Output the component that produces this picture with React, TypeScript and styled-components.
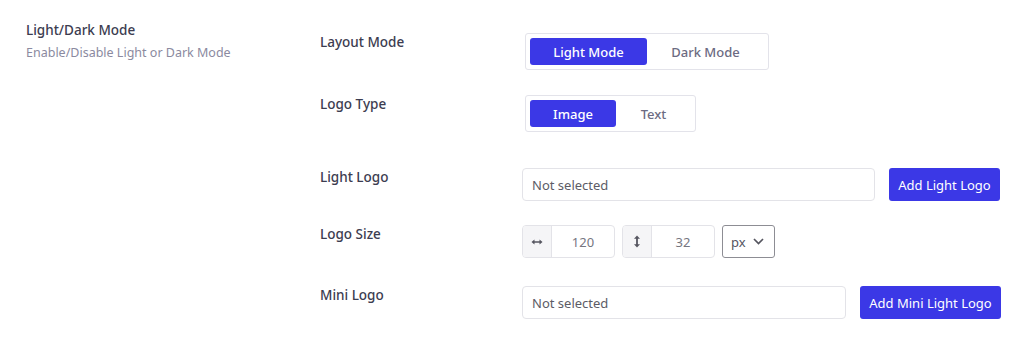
import React from "react";
import styled, { createGlobalStyle } from "styled-components";

const Global = createGlobalStyle`
  html, body { margin: 0; padding: 0; background: #ffffff; }
  body { font-family: "Noto Sans", "Open Sans", sans-serif; }
  * { box-sizing: border-box; }
`;

const Page = styled.div`
  display: flex;
  align-items: flex-start;
  padding: 21px 0 0 26px;
  width: 1034px;
  height: 355px;
`;

const Intro = styled.div`
  width: 294px;
  flex-shrink: 0;
  display: flex;
  flex-direction: column;
  gap: 5px;
`;

const Title = styled.div`
  font-size: 13.5px;
  line-height: 18px;
  font-weight: 500;
  color: #3c3c50;
`;

const Subtitle = styled.div`
  font-size: 12.5px;
  line-height: 18px;
  color: #8b8aa0;
`;

const Fields = styled.div`
  display: flex;
  flex-direction: column;
  padding-top: 12px;
`;

const Row = styled.div<{ $top: number }>`
  display: flex;
  align-items: flex-start;
  margin-top: ${(p) => p.$top}px;
`;

const Label = styled.div`
  width: 202px;
  flex-shrink: 0;
  font-size: 13.5px;
  line-height: 18px;
  font-weight: 500;
  color: #3c3c50;
`;

const Segmented = styled.div`
  display: flex;
  padding: 4px;
  border: 1px solid #e3e3ea;
  border-radius: 3px;
  margin-left: 3px;
`;

const SegButton = styled.button<{ $active?: boolean; $w: number }>`
  width: ${(p) => p.$w}px;
  height: 27px;
  border: none;
  border-radius: 3px;
  font-family: inherit;
  font-size: 13px;
  font-weight: 500;
  background: ${(p) => (p.$active ? "#3b38e6" : "transparent")};
  color: ${(p) => (p.$active ? "#ffffff" : "#6c6b82")};
  cursor: pointer;
  padding: 0;
`;

const FileInput = styled.div<{ $w: number }>`
  width: ${(p) => p.$w}px;
  height: 33px;
  border: 1px solid #e3e3e8;
  border-radius: 4px;
  display: flex;
  align-items: center;
  padding-left: 9px;
  font-size: 13px;
  color: #5c5c66;
`;

const PrimaryButton = styled.button<{ $gap: number; $w: number }>`
  margin-left: ${(p) => p.$gap}px;
  width: ${(p) => p.$w}px;
  height: 33px;
  border: none;
  border-radius: 3px;
  background: #3b38e6;
  color: #ffffff;
  font-family: inherit;
  font-size: 13px;
  padding: 0;
  cursor: pointer;
`;

const SizeGroup = styled.div`
  display: flex;
  gap: 7px;
`;

const InputGroup = styled.div`
  display: flex;
  width: 93px;
  height: 33px;
  border: 1px solid #e3e3e8;
  border-radius: 4px;
  overflow: hidden;
`;

const Addon = styled.div`
  width: 29px;
  flex-shrink: 0;
  background: #f5f5f7;
  border-right: 1px solid #e3e3e8;
  display: flex;
  align-items: center;
  justify-content: center;
  color: #55555f;
`;

const NumberValue = styled.div`
  flex: 1;
  display: flex;
  align-items: center;
  justify-content: center;
  font-size: 13px;
  color: #76767f;
`;

const Select = styled.div`
  width: 53px;
  height: 33px;
  border: 1px solid #8d8d94;
  border-radius: 3px;
  display: flex;
  align-items: center;
  padding-left: 8px;
  gap: 7px;
  font-size: 13px;
  color: #55555f;
`;

const HArrow = () => (
  <svg width="12" height="8" viewBox="0 0 12 8" fill="none">
    <path d="M2.5 4h7" stroke="currentColor" strokeWidth="1.6" />
    <path d="M0.5 4L3.5 1.5V6.5Z" fill="currentColor" />
    <path d="M11.5 4L8.5 1.5V6.5Z" fill="currentColor" />
  </svg>
);

const VArrow = () => (
  <svg width="8" height="13" viewBox="0 0 8 13" fill="none">
    <path d="M4 2.5v8" stroke="currentColor" strokeWidth="1.8" />
    <path d="M4 0.5L1 3.8H7Z" fill="currentColor" />
    <path d="M4 12.5L1 9.2H7Z" fill="currentColor" />
  </svg>
);

const Chevron = () => (
  <svg width="11" height="7" viewBox="0 0 11 7" fill="none">
    <path d="M1 1l4.5 4.5L10 1" stroke="#55555f" strokeWidth="1.7" />
  </svg>
);

export default function App() {
  return (
    <>
      <Global />
      <Page>
        <Intro>
          <Title>Light/Dark Mode</Title>
          <Subtitle>Enable/Disable Light or Dark Mode</Subtitle>
        </Intro>
        <Fields>
          <Row $top={0}>
            <Label>Layout Mode</Label>
            <Segmented>
              <SegButton $active $w={117}>Light Mode</SegButton>
              <SegButton $w={117}>Dark Mode</SegButton>
            </Segmented>
          </Row>
          <Row $top={25}>
            <Label>Logo Type</Label>
            <Segmented>
              <SegButton $active $w={86}>Image</SegButton>
              <SegButton $w={75}>Text</SegButton>
            </Segmented>
          </Row>
          <Row $top={36}>
            <Label>Light Logo</Label>
            <FileInput $w={353}>Not selected</FileInput>
            <PrimaryButton $gap={14} $w={111}>Add Light Logo</PrimaryButton>
          </Row>
          <Row $top={24}>
            <Label>Logo Size</Label>
            <SizeGroup>
              <InputGroup>
                <Addon><HArrow /></Addon>
                <NumberValue>120</NumberValue>
              </InputGroup>
              <InputGroup>
                <Addon><VArrow /></Addon>
                <NumberValue>32</NumberValue>
              </InputGroup>
              <Select>
                px <Chevron />
              </Select>
            </SizeGroup>
          </Row>
          <Row $top={28}>
            <Label>Mini Logo</Label>
            <FileInput $w={324}>Not selected</FileInput>
            <PrimaryButton $gap={14} $w={141}>Add Mini Light Logo</PrimaryButton>
          </Row>
        </Fields>
      </Page>
    </>
  );
}
